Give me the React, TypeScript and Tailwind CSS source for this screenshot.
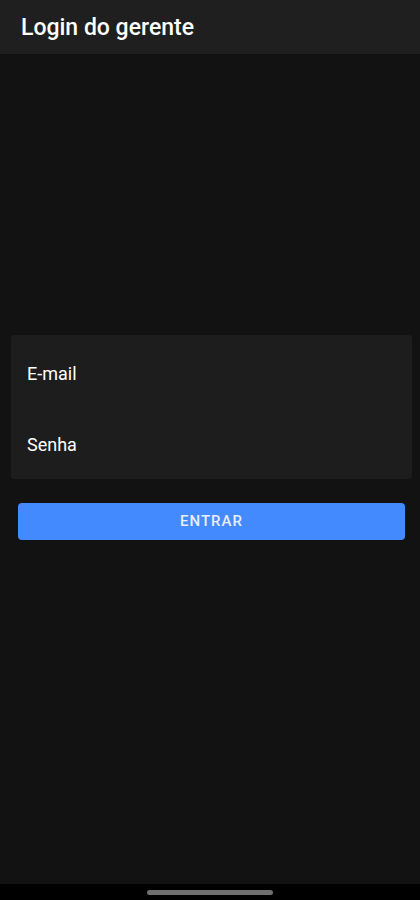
export default function App() {
  return (
    <div className="flex h-[900px] w-[420px] flex-col bg-[#121212] text-white" style={{ fontFamily: 'Roboto, "Noto Sans", sans-serif' }}>
      {/* App bar */}
      <header className="flex h-[54px] items-center bg-[#1f1f1f] px-[21px]">
        <h1 className="text-[23px] font-medium leading-none">Login do gerente</h1>
      </header>

      <main className="flex flex-1 flex-col pl-[11px] pr-[8px] pt-[281px]">
        <div className="flex h-[144px] flex-col rounded-[3px] bg-[#1d1d1d] px-[16px]">
          <label className="flex h-[78px] items-center pb-[2px] text-[18px]">E-mail</label>
          <label className="flex h-[56px] items-center pt-[6px] text-[18px]">Senha</label>
        </div>

        <button className="mx-[7px] mt-[24px] h-[37px] rounded-[4px] bg-[#448aff] text-[15px] font-medium tracking-[0.07em] text-[#e8eefa]">
          ENTRAR
        </button>
      </main>

      {/* Gesture bar */}
      <div className="flex h-[16px] items-center justify-center bg-black">
        <div className="h-[5px] w-[126px] rounded-full bg-[#6f6f6f]" />
      </div>
    </div>
  );
}
